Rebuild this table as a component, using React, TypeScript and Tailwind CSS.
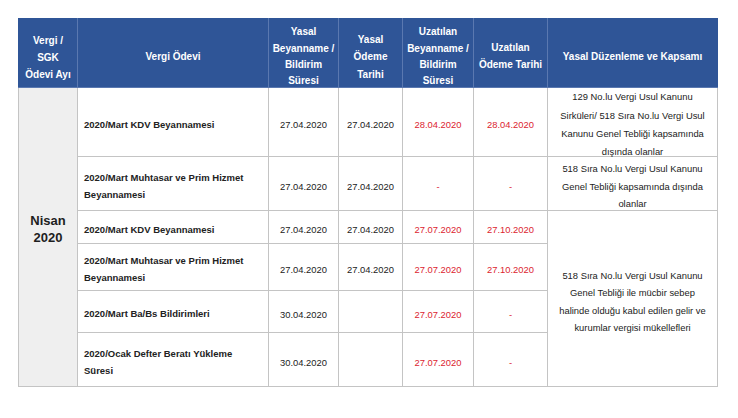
import React from "react";

const RED = "text-[#dc2430]";

type Row = {
  odev: React.ReactNode;
  tr: string;
  box: string;
  yasalBeyan: string;
  yasalOdeme: string;
  uzBeyan: string;
  uzOdeme: string;
};

const rows: Row[] = [
  { odev: "2020/Mart KDV Beyannamesi", tr: "h-[69px]", box: "h-[68px]", yasalBeyan: "27.04.2020", yasalOdeme: "27.04.2020", uzBeyan: "28.04.2020", uzOdeme: "28.04.2020" },
  { odev: <>2020/Mart Muhtasar ve Prim Hizmet<br />Beyannamesi</>, tr: "h-[54px]", box: "h-[53px]", yasalBeyan: "27.04.2020", yasalOdeme: "27.04.2020", uzBeyan: "-", uzOdeme: "-" },
  { odev: "2020/Mart KDV Beyannamesi", tr: "h-[33px]", box: "h-[32px]", yasalBeyan: "27.04.2020", yasalOdeme: "27.04.2020", uzBeyan: "27.07.2020", uzOdeme: "27.10.2020" },
  { odev: <>2020/Mart Muhtasar ve Prim Hizmet<br />Beyannamesi</>, tr: "h-[47px]", box: "h-[46px]", yasalBeyan: "27.04.2020", yasalOdeme: "27.04.2020", uzBeyan: "27.07.2020", uzOdeme: "27.10.2020" },
  { odev: "2020/Mart Ba/Bs Bildirimleri", tr: "h-[42px]", box: "h-[41px]", yasalBeyan: "30.04.2020", yasalOdeme: "", uzBeyan: "27.07.2020", uzOdeme: "-" },
  { odev: <>2020/Ocak Defter Beratı Yükleme<br />Süresi</>, tr: "h-[54px]", box: "h-[53px]", yasalBeyan: "30.04.2020", yasalOdeme: "", uzBeyan: "27.07.2020", uzOdeme: "-" },
];

const th = "border border-[#5a78b0] border-t-[#2f5597] p-0 align-middle font-bold whitespace-nowrap text-white";
const td = "border border-[#c4c4c4] p-0 align-middle whitespace-nowrap";

function Head({ children, lh = "leading-[16.5px]", extra = "" }: { children: React.ReactNode; lh?: string; extra?: string }) {
  return (
    <th className={`${th} ${extra}`}>
      <div className={`flex h-[68px] flex-col justify-center pt-[8px] text-center ${lh}`}>{children}</div>
    </th>
  );
}

function Cell({ box, children, className = "", lh = "leading-[17.5px]", align = "items-center text-center" }: { box: string; children?: React.ReactNode; className?: string; lh?: string; align?: string }) {
  return (
    <td className={`${td} ${className}`}>
      <div className={`flex flex-col justify-center pt-[6px] ${box} ${lh} ${align}`}>
        <div>{children}</div>
      </div>
    </td>
  );
}

export default function App() {
  return (
    <div className="min-h-[418px] w-[738px] bg-white pl-[18px] pt-[18px] font-['Liberation_Sans',Arial,sans-serif] text-[9.4px] text-[#222]">
      <table className="w-[699px] table-fixed border-collapse">
        <colgroup>
          <col className="w-[59px]" />
          <col className="w-[191px]" />
          <col className="w-[70px]" />
          <col className="w-[64px]" />
          <col className="w-[71px]" />
          <col className="w-[74px]" />
          <col className="w-[170px]" />
        </colgroup>
        <thead>
          <tr className="h-[69px] bg-[#2f5597] text-[10px]">
            <Head lh="leading-[17px]" extra="border-l-[#2f5597]">Vergi /<br />SGK<br />Ödevi Ayı</Head>
            <Head>Vergi Ödevi</Head>
            <Head lh="leading-[16.4px]">Yasal<br />Beyanname /<br />Bildirim<br />Süresi</Head>
            <Head lh="leading-[17.5px]">Yasal<br />Ödeme<br />Tarihi</Head>
            <Head lh="leading-[16.4px]">Uzatılan<br />Beyanname /<br />Bildirim<br />Süresi</Head>
            <Head lh="leading-[16.6px]">Uzatılan<br />Ödeme Tarihi</Head>
            <Head extra="border-r-[#2f5597]">Yasal Düzenleme ve Kapsamı</Head>
          </tr>
        </thead>
        <tbody>
          {rows.map((r, i) => (
            <tr key={i} className={r.tr}>
              {i === 0 && (
                <td rowSpan={6} className={`${td} bg-[#efefef]`}>
                  <div className="flex h-[298px] flex-col items-center justify-center pb-[16px] text-center text-[13px] font-bold leading-[17px] text-[#1e1e1e]">
                    <div>Nisan<br />2020</div>
                  </div>
                </td>
              )}
              <Cell box={r.box} className="pl-[6px] text-[9.5px] font-bold" lh="leading-[16.8px]" align="items-start text-left">{r.odev}</Cell>
              <Cell box={r.box}>{r.yasalBeyan}</Cell>
              <Cell box={r.box}>{r.yasalOdeme}</Cell>
              <Cell box={r.box} className={RED}>{r.uzBeyan}</Cell>
              <Cell box={r.box} className={RED}>{r.uzOdeme}</Cell>
              {i === 0 && (
                <Cell box={r.box} lh="leading-[18.3px]">
                  129 No.lu Vergi Usul Kanunu<br />
                  Sirküleri/ 518 Sıra No.lu Vergi Usul<br />
                  Kanunu Genel Tebliği kapsamında<br />
                  dışında olanlar
                </Cell>
              )}
              {i === 1 && (
                <Cell box={r.box} lh="leading-[17.7px]">
                  518 Sıra No.lu Vergi Usul Kanunu<br />
                  Genel Tebliği kapsamında dışında<br />
                  olanlar
                </Cell>
              )}
              {i === 2 && (
                <td rowSpan={4} className={td}>
                  <div className="flex h-[175px] flex-col items-center justify-center pt-[6px] text-center leading-[17.3px]">
                    <div>
                      518 Sıra No.lu Vergi Usul Kanunu<br />
                      Genel Tebliği ile mücbir sebep<br />
                      halinde olduğu kabul edilen gelir ve<br />
                      kurumlar vergisi mükellefleri
                    </div>
                  </div>
                </td>
              )}
            </tr>
          ))}
        </tbody>
      </table>
    </div>
  );
}
